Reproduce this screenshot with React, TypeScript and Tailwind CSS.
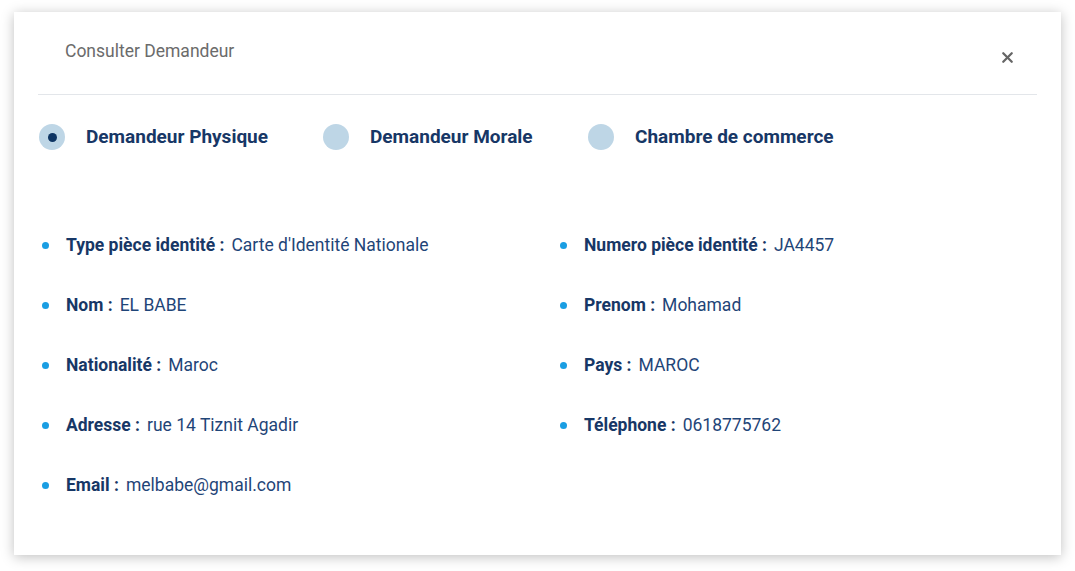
import { X } from "lucide-react";

const left = [
  { label: "Type pièce identité", value: "Carte d'Identité Nationale" },
  { label: "Nom", value: "EL BABE" },
  { label: "Nationalité", value: "Maroc" },
  { label: "Adresse", value: "rue 14 Tiznit Agadir" },
  { label: "Email", value: "melbabe@gmail.com" },
];

const right = [
  { label: "Numero pièce identité", value: "JA4457" },
  { label: "Prenom", value: "Mohamad" },
  { label: "Pays", value: "MAROC" },
  { label: "Téléphone", value: "0618775762" },
];

const types = [
  { label: "Demandeur Physique", checked: true, w: "w-[284px]" },
  { label: "Demandeur Morale", checked: false, w: "w-[265px]" },
  { label: "Chambre de commerce", checked: false, w: "w-auto" },
];

function Item({ label, value }: { label: string; value: string }) {
  return (
    <li className="flex h-[60px] items-center">
      <span className="ml-[4px] mr-[17px] h-[7px] w-[7px] rounded-full bg-[#1a9ee3]" />
      <span className="font-bold text-[#173766]">{label} :</span>
      <span className="ml-[7px] text-[#1f4578]">{value}</span>
    </li>
  );
}

export default function App() {
  return (
    <div className="min-h-[571px] bg-white pl-[14px] pt-[12px] font-['Roboto',sans-serif]">
      <div className="h-[543px] w-[1047px] bg-white px-[24px] shadow-[0_2px_12px_rgba(0,0,0,0.25)]">
        {/* Header */}
        <div className="flex h-[83px] items-start justify-between border-b border-[#e3e6ea]">
          <h2 className="pl-[27px] pt-[26px] text-[17.5px] text-[#6b6b6b]">
            Consulter Demandeur
          </h2>
          <button className="mr-[21px] mt-[37px] text-[#666]">
            <X className="h-[17px] w-[17px]" strokeWidth={3.2} />
          </button>
        </div>

        {/* Type de demandeur */}
        <div className="flex items-center pl-[1px] pt-[28px]">
          {types.map((t) => (
            <label key={t.label} className={`flex items-center ${t.w}`}>
              <span className="flex h-[26px] w-[26px] items-center justify-center rounded-full bg-[#bed6e6]">
                {t.checked && (
                  <span className="h-[9px] w-[9px] rounded-full bg-[#0e3563]" />
                )}
              </span>
              <span className="ml-[21px] text-[19px] font-bold text-[#173766]">
                {t.label}
              </span>
            </label>
          ))}
        </div>

        {/* Infos */}
        <div className="mt-[64px] grid grid-cols-[518px_1fr] text-[17.5px]">
          <ul>
            {left.map((i) => (
              <Item key={i.label} {...i} />
            ))}
          </ul>
          <ul>
            {right.map((i) => (
              <Item key={i.label} {...i} />
            ))}
          </ul>
        </div>
      </div>
    </div>
  );
}
